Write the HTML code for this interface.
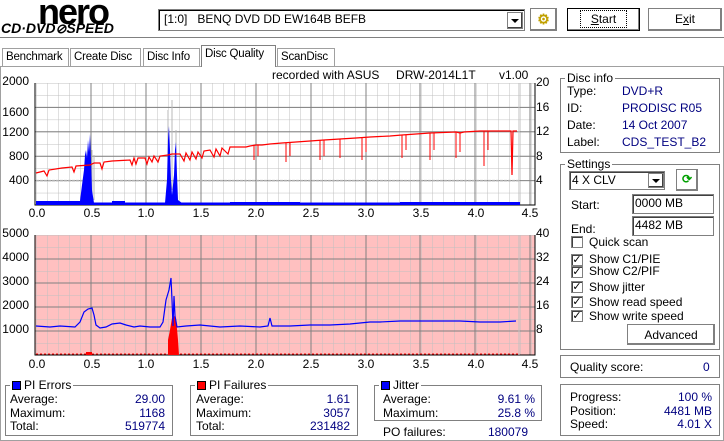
<!DOCTYPE html>
<html><head><meta charset="utf-8">
<style>
*{box-sizing:border-box;margin:0;padding:0}
body{width:724px;height:441px;background:#fff;font-family:"Liberation Sans",sans-serif;font-size:12px;color:#000;position:relative;overflow:hidden}
.a{position:absolute;white-space:nowrap}
.btn{position:absolute;border:1px solid #000;box-shadow:inset -1px -1px #808080,inset 1px 1px #fff;background:#fff;text-align:center;line-height:20px}
.grp{position:absolute;border:1px solid #808080;box-shadow:1px 1px #fff inset}
.gt{position:absolute;top:-8px;left:4px;background:#fff;padding:0 2px;line-height:14px;white-space:nowrap}
.sq{display:inline-block;width:9px;height:9px;border:1px solid #000;margin-right:3px;vertical-align:-1px}
.blue{color:#000080}
.cb{position:absolute;width:12px;height:12px;border:1px solid #808080;box-shadow:inset 1px 1px #404040;background:#fff;font-size:11px;line-height:10px;text-align:center}
.inp{position:absolute;border:1px solid #808080;box-shadow:inset 1px 1px #404040;background:#fff;padding-left:2px;line-height:17px}
.tab{position:absolute;top:48px;height:19px;border:1px solid #a0a0a0;border-bottom:none;padding:0 3px;line-height:17px;background:#fff;white-space:nowrap;font-size:11.5px;letter-spacing:-0.2px}
.r{text-align:right}
</style></head><body>
<div class="a" style="left:38px;top:-9px;font:bold 36px 'Liberation Sans',sans-serif;letter-spacing:-2px">nero</div>
<div class="a" style="left:1px;top:20px;font:italic bold 14px 'Liberation Sans',sans-serif">CD·DVD<span style="font-size:13px">⊘</span>SPEED</div>
<div class="a" style="left:158px;top:9px;width:367px;height:22px;border:1px solid #808080;box-shadow:inset 1px 1px #000"></div>
<div class="a" style="left:164px;top:12px">[1:0]&nbsp;&nbsp; BENQ DVD DD EW164B BEFB</div>
<div class="a" style="left:507px;top:12px;width:16px;height:17px;border:1px solid #808080;background:#fff;box-shadow:inset -1px -1px #404040"><div style="margin:6px auto 0;width:0;height:0;border-left:4px solid transparent;border-right:4px solid transparent;border-top:4px solid #000"></div></div>
<div class="btn" style="left:530px;top:8px;width:27px;height:23px;border-color:#808080"><span style="color:#c0a000;font-size:14px;font-weight:bold">⚙</span></div>
<div class="btn" style="left:567px;top:8px;width:73px;height:23px"><span style="outline:1px dotted #000;padding:1px 10px"><u>S</u>tart</span></div>
<div class="btn" style="left:648px;top:8px;width:74px;height:23px;border-color:#808080">E<u>x</u>it</div>
<div class="a" style="left:0;top:37px;width:724px;height:2px;border-top:1px solid #808080;border-bottom:1px solid #fff"></div>
<div class="tab" style="left:2px;width:67px">Benchmark</div>
<div class="tab" style="left:70px;width:71px">Create Disc</div>
<div class="tab" style="left:143px;width:57px">Disc Info</div>
<div class="tab" style="left:201px;top:45px;height:22px;width:75px;border-color:#808080;z-index:2">Disc Quality</div>
<div class="tab" style="left:277px;width:58px">ScanDisc</div>
<div class="a" style="left:0;top:66px;width:724px;height:375px;border:1px solid #a0a0a0"></div>
<div class="a" style="left:272px;top:68px">recorded with ASUS&nbsp;&nbsp;&nbsp;&nbsp; DRW-2014L1T&nbsp;&nbsp;&nbsp;&nbsp;&nbsp;&nbsp; v1.00</div>

<svg class="a" style="left:0;top:0" width="560" height="380" font-family="Liberation Sans" font-size="12">
<defs>
<pattern id="g1" x="36" y="83" width="11" height="12.2" patternUnits="userSpaceOnUse"><path d="M0 0V12.2M0 0H11" stroke="#c0c0c0" fill="none"/></pattern>
<pattern id="g2" x="36" y="235" width="11" height="12" patternUnits="userSpaceOnUse"><path d="M0 0V12M0 0H11" stroke="#c0c0c0" fill="none"/></pattern>
</defs>
<rect x="35" y="83" width="500" height="122" fill="#fff"/>
<rect x="35" y="83" width="500" height="122" fill="url(#g1)"/>
<g stroke="#808080">
<path d="M91 83V205M146 83V205M201 83V205M256 83V205M311 83V205M366 83V205M420 83V205M475 83V205M530 83V205"/>
<path d="M35 107.4H535M35 131.8H535M35 156.2H535M35 180.6H535"/>
</g>
<path d="M35 83V205H535V83" stroke="#000" fill="none"/>
<path d="M36 180.6H520" stroke="#b0b0b0" stroke-dasharray="3 1" stroke-width="1.5"/>
<path d="M519 83V205" stroke="#c0c0c0"/>
<path d="M92 150V200M94 155V200M168 110V200M172 100V190M176 130V200" stroke="#b8b8b8"/>
<path d="M36 205V201H80L82 185L84 170L85 155L86 150L87 158L88 140L89 152L90 134L91 160L92 190L94 203L112 203V201H125V203H165L167 180L168 140L169 126L170 150L171 180L172 195L174 175L175 150L176 142L177 175L178 200L182 203H230V202H300V203H400V202H520V205Z" fill="#0000ff"/>
<path d="M36 203.5H520" stroke="#0000ff" stroke-width="2"/>
<path d="M36 173L44 171L47 176L49 170L62 168L72 167L74 172L76 166L90 165L94 163L100 163L102 169L104 162L112 161L130 160L132 165L134 158L136 164L138 158L145 158L147 164L149 157L152 162L154 156L158 162L160 156L168 155L172 154L180 154L184 161L186 153L190 160L192 152L196 159L198 152L202 158L204 151L210 150L214 157L216 149L220 156L222 148L228 154L230 147L246 147L250 146L256 145L262 145L270 144L282 143L296 142L310 141L324 140L340 139L356 138L370 137L390 136L402 135L416 134L430 133L456 132L460 133L464 132L480 131L500 131L511 131L512 175L513 131L517 131" stroke="#ff0000" fill="none" stroke-width="1.2"/>
<path d="M254 145V160M258 145V156M286 143V162M290 143V156M320 140V160M324 140V156M340 139V158M362 138V160M366 138V152M402 135V158M406 135V150M430 133V160M434 133V150M456 132V158M460 132V152M484 131V166M488 131V150" stroke="#ff0000"/>
<g text-anchor="end"><text x="29" y="85">2000</text><text x="29" y="116">1600</text><text x="29" y="136">1200</text><text x="29" y="160">800</text><text x="29" y="184">400</text></g>
<g><text x="536" y="86">20</text><text x="536" y="111">16</text><text x="536" y="135">12</text><text x="536" y="160">8</text><text x="536" y="184">4</text></g>
<g text-anchor="middle"><text x="37" y="217">0.0</text><text x="92" y="217">0.5</text><text x="146" y="217">1.0</text><text x="201" y="217">1.5</text><text x="256" y="217">2.0</text><text x="311" y="217">2.5</text><text x="366" y="217">3.0</text><text x="421" y="217">3.5</text><text x="476" y="217">4.0</text><text x="530" y="217">4.5</text></g>
<rect x="35" y="235" width="500" height="120" fill="#ffc0c0"/>
<rect x="35" y="235" width="500" height="120" fill="url(#g2)"/>
<g stroke="#808080">
<path d="M91 235V355M146 235V355M201 235V355M256 235V355M311 235V355M366 235V355M420 235V355M475 235V355M530 235V355"/>
<path d="M35 259H535M35 283H535M35 307H535M35 331H535"/>
</g>
<path d="M35 235V355H535V235" stroke="#000" fill="none"/>
<path d="M519 235V355" stroke="#c0c0c0"/>
<path d="M36 354H520" stroke="#ff0000" stroke-dasharray="2 2"/>
<path d="M86 355V352H92V355ZM168 355V340L170 330L172 318L174 316L176 318L178 340L179 355Z" fill="#ff0000"/>
<path d="M36 326L50 327L60 326L75 327L80 322L84 312L88 309L92 308L94 315L96 325L100 328L106 327L112 324L120 323L126 325L134 327L140 326L150 327L160 327L163 322L166 300L169 290L171 278L172 300L173 326L174 296L175 316L177 327L186 326L200 325L220 327L240 326L260 327L268 326L270 318L272 326L290 326L310 325L330 325L350 324L370 322L380 322L400 321L420 321L440 321L460 321L480 322L500 322L516 321" stroke="#0000ff" fill="none" stroke-width="1.2"/>
<g text-anchor="end"><text x="29" y="237">5000</text><text x="29" y="261">4000</text><text x="29" y="285">3000</text><text x="29" y="309">2000</text><text x="29" y="333">1000</text></g>
<g><text x="536" y="237">40</text><text x="536" y="261">32</text><text x="536" y="285">24</text><text x="536" y="309">16</text><text x="536" y="333">8</text></g>
<g text-anchor="middle"><text x="37" y="368">0.0</text><text x="92" y="368">0.5</text><text x="146" y="368">1.0</text><text x="201" y="368">1.5</text><text x="256" y="368">2.0</text><text x="311" y="368">2.5</text><text x="366" y="368">3.0</text><text x="421" y="368">3.5</text><text x="476" y="368">4.0</text><text x="530" y="368">4.5</text></g>
</svg>

<div class="grp" style="left:560px;top:78px;width:160px;height:75px"><div class="gt">Disc info</div></div>
<div class="a" style="left:567px;top:83px;line-height:17px">Type:<br>ID:<br>Date:<br>Label:</div>
<div class="a blue" style="left:622px;top:83px;line-height:17px">DVD+R<br>PRODISC R05<br>14 Oct 2007<br>CDS_TEST_B2</div>
<div class="grp" style="left:560px;top:164px;width:160px;height:186px"><div class="gt">Settings</div></div>
<div class="inp" style="left:569px;top:171px;width:96px;height:19px">4 X CLV</div>
<div class="a" style="left:648px;top:173px;width:16px;height:15px;border:1px solid #808080;box-shadow:inset -1px -1px #404040"><div style="margin:5px auto 0;width:0;height:0;border-left:4px solid transparent;border-right:4px solid transparent;border-top:4px solid #000"></div></div>
<div class="btn" style="left:676px;top:169px;width:22px;height:22px;border-color:#808080;color:#00a000;font-weight:bold;line-height:18px">⟳</div>
<div class="a" style="left:571px;top:198px">Start:</div>
<div class="inp" style="left:632px;top:194px;width:82px;height:20px">0000 MB</div>
<div class="a" style="left:571px;top:222px">End:</div>
<div class="inp" style="left:632px;top:216px;width:82px;height:20px">4482 MB</div>
<div class="cb" style="left:571px;top:236px"></div><div class="a" style="left:589px;top:235px">Quick scan</div>
<div class="cb" style="left:571px;top:254px">✓</div><div class="a" style="left:589px;top:252px">Show C1/PIE</div>
<div class="cb" style="left:571px;top:266px">✓</div><div class="a" style="left:589px;top:264px">Show C2/PIF</div>
<div class="cb" style="left:571px;top:281px">✓</div><div class="a" style="left:589px;top:280px">Show jitter</div>
<div class="cb" style="left:571px;top:296px">✓</div><div class="a" style="left:589px;top:295px">Show read speed</div>
<div class="cb" style="left:571px;top:310px">✓</div><div class="a" style="left:589px;top:309px">Show write speed</div>
<div class="btn" style="left:627px;top:324px;width:88px;height:21px;border-color:#808080">Advanced</div>
<div class="grp" style="left:560px;top:355px;width:160px;height:23px"></div>
<div class="a" style="left:570px;top:360px">Quality score:</div>
<div class="a blue" style="left:703px;top:360px">0</div>
<div class="grp" style="left:560px;top:384px;width:160px;height:52px"></div>
<div class="a" style="left:570px;top:391px;line-height:13.5px">Progress:<br>Position:<br>Speed:</div>
<div class="a blue r" style="left:630px;top:391px;width:82px;line-height:13.5px">100 %<br>4481 MB<br>4.01 X</div>
<div class="grp" style="left:5px;top:385px;width:168px;height:51px"><div class="gt"><span class="sq" style="background:#0000ff"></span>PI Errors</div></div>
<div class="a" style="left:10px;top:393px;line-height:13.5px">Average:<br>Maximum:<br>Total:</div>
<div class="a blue r" style="left:80px;top:393px;width:85px;line-height:13.5px">29.00<br>1168<br>519774</div>
<div class="grp" style="left:190px;top:385px;width:168px;height:51px"><div class="gt"><span class="sq" style="background:#ff0000"></span>PI Failures</div></div>
<div class="a" style="left:196px;top:393px;line-height:13.5px">Average:<br>Maximum:<br>Total:</div>
<div class="a blue r" style="left:260px;top:393px;width:90px;line-height:13.5px">1.61<br>3057<br>231482</div>
<div class="grp" style="left:374px;top:385px;width:168px;height:36px"><div class="gt"><span class="sq" style="background:#0000ff"></span>Jitter</div></div>
<div class="a" style="left:383px;top:393px;line-height:13.5px">Average:<br>Maximum:</div>
<div class="a blue r" style="left:450px;top:393px;width:85px;line-height:13.5px">9.61 %<br>25.8 %</div>
<div class="a" style="left:383px;top:425px">PO failures:</div>
<div class="a blue r" style="left:450px;top:425px;width:78px">180079</div>
</body></html>
